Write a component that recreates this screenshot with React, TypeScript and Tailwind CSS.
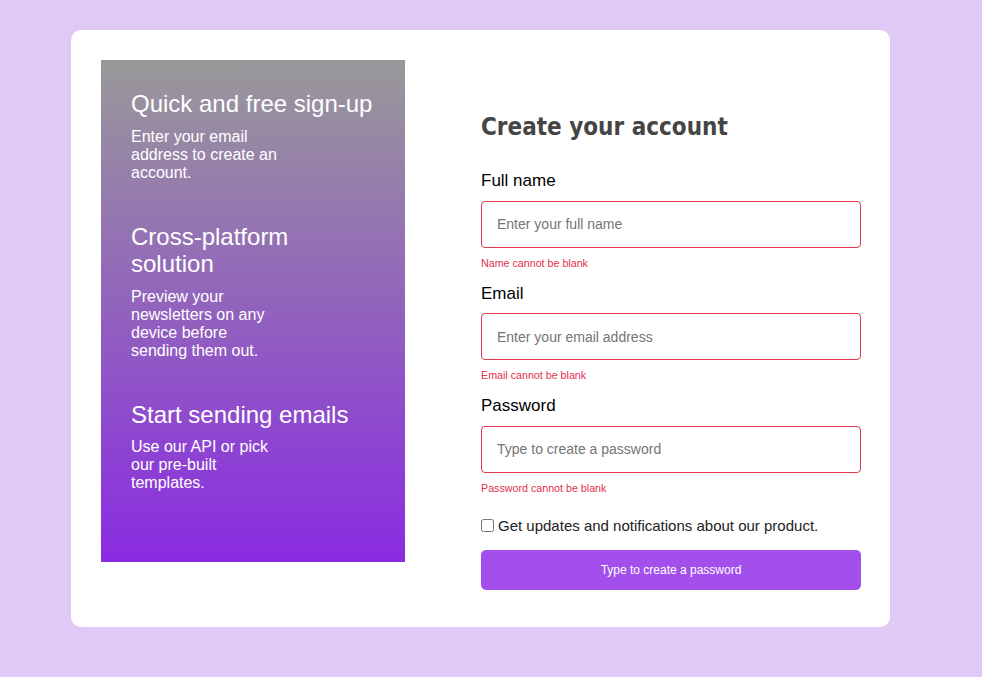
export default function App() {
  const sections = [
    {
      title: "Quick and free sign-up",
      body: "Enter your email address to create an account.",
    },
    {
      title: "Cross-platform solution",
      body: "Preview your newsletters on any device before sending them out.",
    },
    {
      title: "Start sending emails",
      body: "Use our API or pick our pre-built templates.",
    },
  ];
  const fields = [
    { label: "Full name", placeholder: "Enter your full name", error: "Name cannot be blank", type: "text" },
    { label: "Email", placeholder: "Enter your email address", error: "Email cannot be blank", type: "email" },
    { label: "Password", placeholder: "Type to create a password", error: "Password cannot be blank", type: "password" },
  ];
  return (
    <div
      className="min-h-screen w-full bg-[#e0caf5] pt-[30px] pl-[71px]"
      style={{ fontFamily: '"Liberation Sans", Arial, sans-serif' }}
    >
      <div className="flex w-[819px] h-[597px] rounded-[10px] bg-white py-[30px] pl-[30px] pr-[29px]">
        <div className="w-[304px] h-[502px] shrink-0 bg-[linear-gradient(to_bottom,#999999,#8a2be2)] pt-[30px] px-[30px] text-white flex flex-col gap-[41px]">
          {sections.map((s) => (
            <div key={s.title}>
              <h2 className="text-[24px] leading-[1.15] mb-[10px] font-normal">{s.title}</h2>
              <p className="text-[16px] leading-[18px] w-[150px]">{s.body}</p>
            </div>
          ))}
        </div>
        <div className="ml-[76px] w-[380px] shrink-0 pt-[53px] flex flex-col">
          <h1
            className="text-[24px] leading-[28px] font-bold text-[#454545] mb-[30px]"
            style={{ fontFamily: '"DejaVu Sans Condensed", "DejaVu Sans", Verdana, sans-serif' }}
          >
            Create your account
          </h1>
          {fields.map((f) => (
            <div key={f.label} className="flex flex-col mb-[14.9px]">
              <label className="text-[17px] leading-[19.5px] text-black mb-[10px]">{f.label}</label>
              <input
                type={f.type}
                placeholder={f.placeholder}
                className="h-[47px] w-full rounded-[4px] border border-[#e3354c] px-[15px] text-[14px] text-[#333] placeholder:text-[#757575] outline-none"
              />
              <span className="mt-[9px] text-[10.7px] leading-[12.3px] text-[#e32f52]">{f.error}</span>
            </div>
          ))}
          <label className="mt-[8px] flex items-center gap-[4px] text-[15px] leading-[17.2px] text-[#222]">
            <input type="checkbox" className="w-[13px] h-[13px]" />
            <span>Get updates and notifications about our product.</span>
          </label>
          <button className="mt-[16px] h-[40px] w-full rounded-[5px] bg-[#a24feb] text-[12px] text-white">
            Type to create a password
          </button>
        </div>
      </div>
    </div>
  );
}
